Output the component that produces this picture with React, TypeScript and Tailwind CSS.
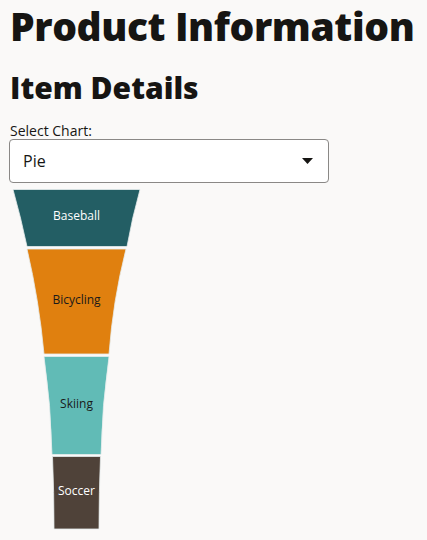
const SEGMENTS = [
  {
    label: "Baseball",
    fill: "#235e64",
    text: "#ffffff",
    d: "M13,189.5 L140,189.5 Q132,218 127,246.5 L27,246.5 Q21,218 13,189.5 Z",
    ty: 217,
  },
  {
    label: "Bicycling",
    fill: "#e0800f",
    text: "#1a1a1a",
    d: "M27,249 L126,249 Q113,300 109,354 L44,354 Q39,300 27,249 Z",
    ty: 301,
  },
  {
    label: "Skiing",
    fill: "#61bbb6",
    text: "#1a1a1a",
    d: "M44,356.5 L109,356.5 Q102,405 101,454.5 L52,454.5 Q51,405 44,356.5 Z",
    ty: 405,
  },
  {
    label: "Soccer",
    fill: "#4f4239",
    text: "#ffffff",
    d: "M52.5,456.5 L100.5,456.5 Q99,492 99,529 L54,529 Q54,492 52.5,456.5 Z",
    ty: 492,
  },
];

function Funnel() {
  return (
    <svg width="160" height="345" viewBox="0 185 160 345" className="block">
      {SEGMENTS.map(s => (
        <g key={s.label}>
          <path d={s.d} fill={s.fill} stroke="#e6ecec" strokeWidth="0.8" />
          <text
            x="76.5"
            y={s.ty}
            fill={s.text}
            fontSize="12"
            textAnchor="middle"
            dominantBaseline="middle"
            fontFamily="'Open Sans', 'Noto Sans', sans-serif"
          >
            {s.label}
          </text>
        </g>
      ))}
    </svg>
  );
}

export default function App() {
  return (
    <div className="min-h-[540px] bg-[#faf9f8] px-[10px] text-[#161513] font-['Open_Sans','Noto_Sans',sans-serif]">
      <h1 className="whitespace-nowrap pt-[2px] text-[39px] font-extrabold leading-[48px] tracking-[-0.4px]">Product Information</h1>
      <h2 className="mt-[20px] text-[30px] font-extrabold leading-[36px]">Item Details</h2>
      <div className="mt-[17px]">
        <label className="block text-[14px] leading-[16px]">Select Chart:</label>
        <div className="-ml-[1px] flex h-[44px] w-[320px] items-center justify-between rounded-[4px] border border-[#8a8886] bg-white pl-[13px] pr-[15px]">
          <span className="text-[16px]">Pie</span>
          <svg width="11" height="6" viewBox="0 0 11 6">
            <path d="M0,0 L11,0 L5.5,6 Z" fill="#161513" />
          </svg>
        </div>
      </div>
      <div className="-ml-[10px] mt-[2px]">
        <Funnel />
      </div>
    </div>
  );
}
